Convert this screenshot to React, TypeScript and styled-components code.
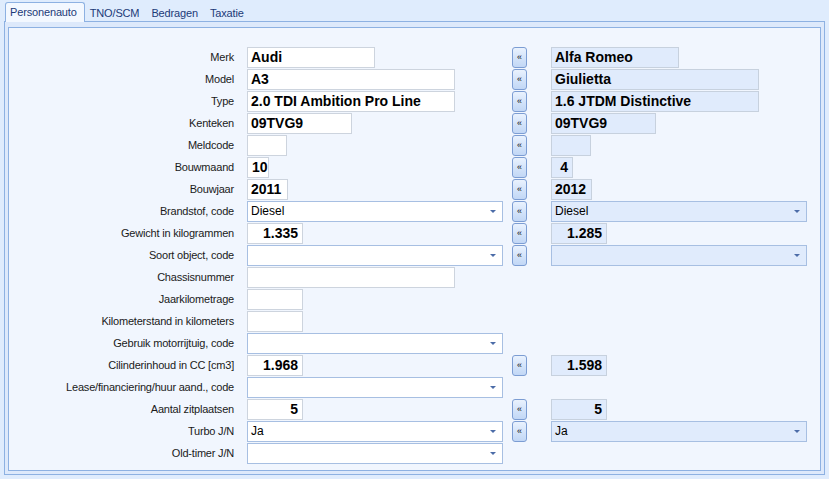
import React from 'react';
import styled, { createGlobalStyle } from 'styled-components';

type Kind = 'text' | 'num' | 'select';

interface Field {
  kind: Kind;
  w: number;
  value?: string;
}

interface Row {
  label: string;
  left: Field;
  copy?: boolean;
  right?: Field;
}

const rows: Row[] = [
  { label: 'Merk', left: { kind: 'text', w: 128, value: 'Audi' }, copy: true, right: { kind: 'text', w: 128, value: 'Alfa Romeo' } },
  { label: 'Model', left: { kind: 'text', w: 208, value: 'A3' }, copy: true, right: { kind: 'text', w: 208, value: 'Giulietta' } },
  { label: 'Type', left: { kind: 'text', w: 208, value: '2.0 TDI Ambition Pro Line' }, copy: true, right: { kind: 'text', w: 208, value: '1.6 JTDM Distinctive' } },
  { label: 'Kenteken', left: { kind: 'text', w: 105, value: '09TVG9' }, copy: true, right: { kind: 'text', w: 105, value: '09TVG9' } },
  { label: 'Meldcode', left: { kind: 'text', w: 40 }, copy: true, right: { kind: 'text', w: 40 } },
  { label: 'Bouwmaand', left: { kind: 'num', w: 22, value: '10' }, copy: true, right: { kind: 'num', w: 22, value: '4' } },
  { label: 'Bouwjaar', left: { kind: 'text', w: 41, value: '2011' }, copy: true, right: { kind: 'text', w: 41, value: '2012' } },
  { label: 'Brandstof, code', left: { kind: 'select', w: 256, value: 'Diesel' }, copy: true, right: { kind: 'select', w: 256, value: 'Diesel' } },
  { label: 'Gewicht in kilogrammen', left: { kind: 'num', w: 56, value: '1.335' }, copy: true, right: { kind: 'num', w: 56, value: '1.285' } },
  { label: 'Soort object, code', left: { kind: 'select', w: 256 }, copy: true, right: { kind: 'select', w: 256 } },
  { label: 'Chassisnummer', left: { kind: 'text', w: 208 } },
  { label: 'Jaarkilometrage', left: { kind: 'text', w: 56 } },
  { label: 'Kilometerstand in kilometers', left: { kind: 'text', w: 56 } },
  { label: 'Gebruik motorrijtuig, code', left: { kind: 'select', w: 256 } },
  { label: 'Cilinderinhoud in CC [cm3]', left: { kind: 'num', w: 56, value: '1.968' }, copy: true, right: { kind: 'num', w: 56, value: '1.598' } },
  { label: 'Lease/financiering/huur aand., code', left: { kind: 'select', w: 256 } },
  { label: 'Aantal zitplaatsen', left: { kind: 'num', w: 56, value: '5' }, copy: true, right: { kind: 'num', w: 56, value: '5' } },
  { label: 'Turbo J/N', left: { kind: 'select', w: 256, value: 'Ja' }, copy: true, right: { kind: 'select', w: 256, value: 'Ja' } },
  { label: 'Old-timer J/N', left: { kind: 'select', w: 256 } },
];

const tabs = ['Personenauto', 'TNO/SCM', 'Bedragen', 'Taxatie'];

const GlobalStyle = createGlobalStyle`
  html, body {
    margin: 0;
    padding: 0;
    background: #dfecfd;
  }
  body {
    width: 829px;
    height: 479px;
    overflow: hidden;
    font-family: 'Liberation Sans', Arial, sans-serif;
  }
`;

const Window = styled.div`
  width: 829px;
  height: 479px;
  box-sizing: border-box;
  padding: 2px 4px 4px 4px;
  display: flex;
  flex-direction: column;
`;

const TabStrip = styled.div`
  display: flex;
  align-items: flex-end;
  height: 19px;
  padding-left: 1px;
`;

const Tab = styled.div<{ $active?: boolean }>`
  font-size: 11px;
  letter-spacing: -0.15px;
  color: #1c3a78;
  padding: 0 ${(p) => (p.$active ? '7px' : '6px')} 0 4px;
  height: ${(p) => (p.$active ? '20px' : '19px')};
  line-height: ${(p) => (p.$active ? '19px' : '20px')};
  box-sizing: border-box;
  background: ${(p) => (p.$active ? '#f3f8ff' : 'transparent')};
  border: ${(p) => (p.$active ? '1px solid #8db1e2' : '1px solid transparent')};
  border-bottom: none;
  border-radius: 3px 3px 0 0;
  margin-bottom: ${(p) => (p.$active ? '-1px' : '0')};
  position: relative;
  z-index: 1;
`;

const Outer = styled.div`
  flex: 1;
  border: 1px solid #8db1e2;
  background: #dde9fb;
  padding: 5px 3px 3px 3px;
  display: flex;
`;

const Inner = styled.div`
  flex: 1;
  border: 1px solid #8db1e2;
  background: #f1f6fe;
  padding-top: 19px;
  display: flex;
  flex-direction: column;
`;

const FormRow = styled.div`
  display: flex;
  align-items: flex-start;
  height: 22px;
`;

const Label = styled.div`
  width: 225px;
  flex: none;
  text-align: right;
  font-size: 11px;
  letter-spacing: -0.2px;
  color: #1a1a1a;
  line-height: 21px;
  white-space: nowrap;
`;

const LeftCell = styled.div`
  width: 265px;
  margin-left: 13px;
  flex: none;
  display: flex;
`;

const ButtonCell = styled.div`
  width: 15px;
  flex: none;
`;

const RightCell = styled.div`
  margin-left: 24px;
  display: flex;
`;

const Input = styled.div<{ $w: number; $num?: boolean; $alt?: boolean }>`
  width: ${(p) => p.$w}px;
  height: 21px;
  box-sizing: border-box;
  border: 1px solid ${(p) => (p.$alt ? '#c7d1de' : '#cdd4de')};
  background: ${(p) => (p.$alt ? '#e0ebfc' : '#ffffff')};
  font-size: 14px;
  font-weight: bold;
  color: #000;
  line-height: 19px;
  padding: 0 ${(p) => (p.$num ? '4px' : '3px')};
  text-align: ${(p) => (p.$num ? 'right' : 'left')};
  white-space: nowrap;
  overflow: hidden;
`;

const Select = styled.div<{ $w: number; $alt?: boolean }>`
  width: ${(p) => p.$w}px;
  height: 21px;
  box-sizing: border-box;
  border: 1px solid #a7bfe2;
  background: ${(p) => (p.$alt ? '#e0ebfc' : '#ffffff')};
  font-size: 12px;
  color: #000;
  line-height: 19px;
  padding: 0 3px;
  display: flex;
  justify-content: space-between;
  align-items: center;
`;

const Arrow = styled.span`
  width: 0;
  height: 0;
  margin-right: 3px;
  border-left: 3px solid transparent;
  border-right: 3px solid transparent;
  border-top: 3px solid #4c6ca8;
`;

const CopyButton = styled.div`
  width: 15px;
  height: 21px;
  box-sizing: border-box;
  border: 1px solid #7c9dd3;
  border-radius: 3px;
  background: linear-gradient(#eaf2fe, #d4e4fa 50%, #c2d7f5);
  font-size: 9px;
  line-height: 19px;
  text-align: center;
  color: #111;
`;

const renderField = (f: Field, alt: boolean) =>
  f.kind === 'select' ? (
    <Select $w={f.w} $alt={alt}>
      <span>{f.value}</span>
      <Arrow />
    </Select>
  ) : (
    <Input $w={f.w} $num={f.kind === 'num'} $alt={alt}>
      {f.value}
    </Input>
  );

const App = () => {
  return (
    <>
      <GlobalStyle />
      <Window>
        <TabStrip>
          {tabs.map((t, i) => (
            <Tab key={t} $active={i === 0}>
              {t}
            </Tab>
          ))}
        </TabStrip>
        <Outer>
          <Inner>
            {rows.map((r) => (
              <FormRow key={r.label}>
                <Label>{r.label}</Label>
                <LeftCell>{renderField(r.left, false)}</LeftCell>
                <ButtonCell>{r.copy && <CopyButton>«</CopyButton>}</ButtonCell>
                <RightCell>{r.right && renderField(r.right, true)}</RightCell>
              </FormRow>
            ))}
          </Inner>
        </Outer>
      </Window>
    </>
  );
};

export default App;
